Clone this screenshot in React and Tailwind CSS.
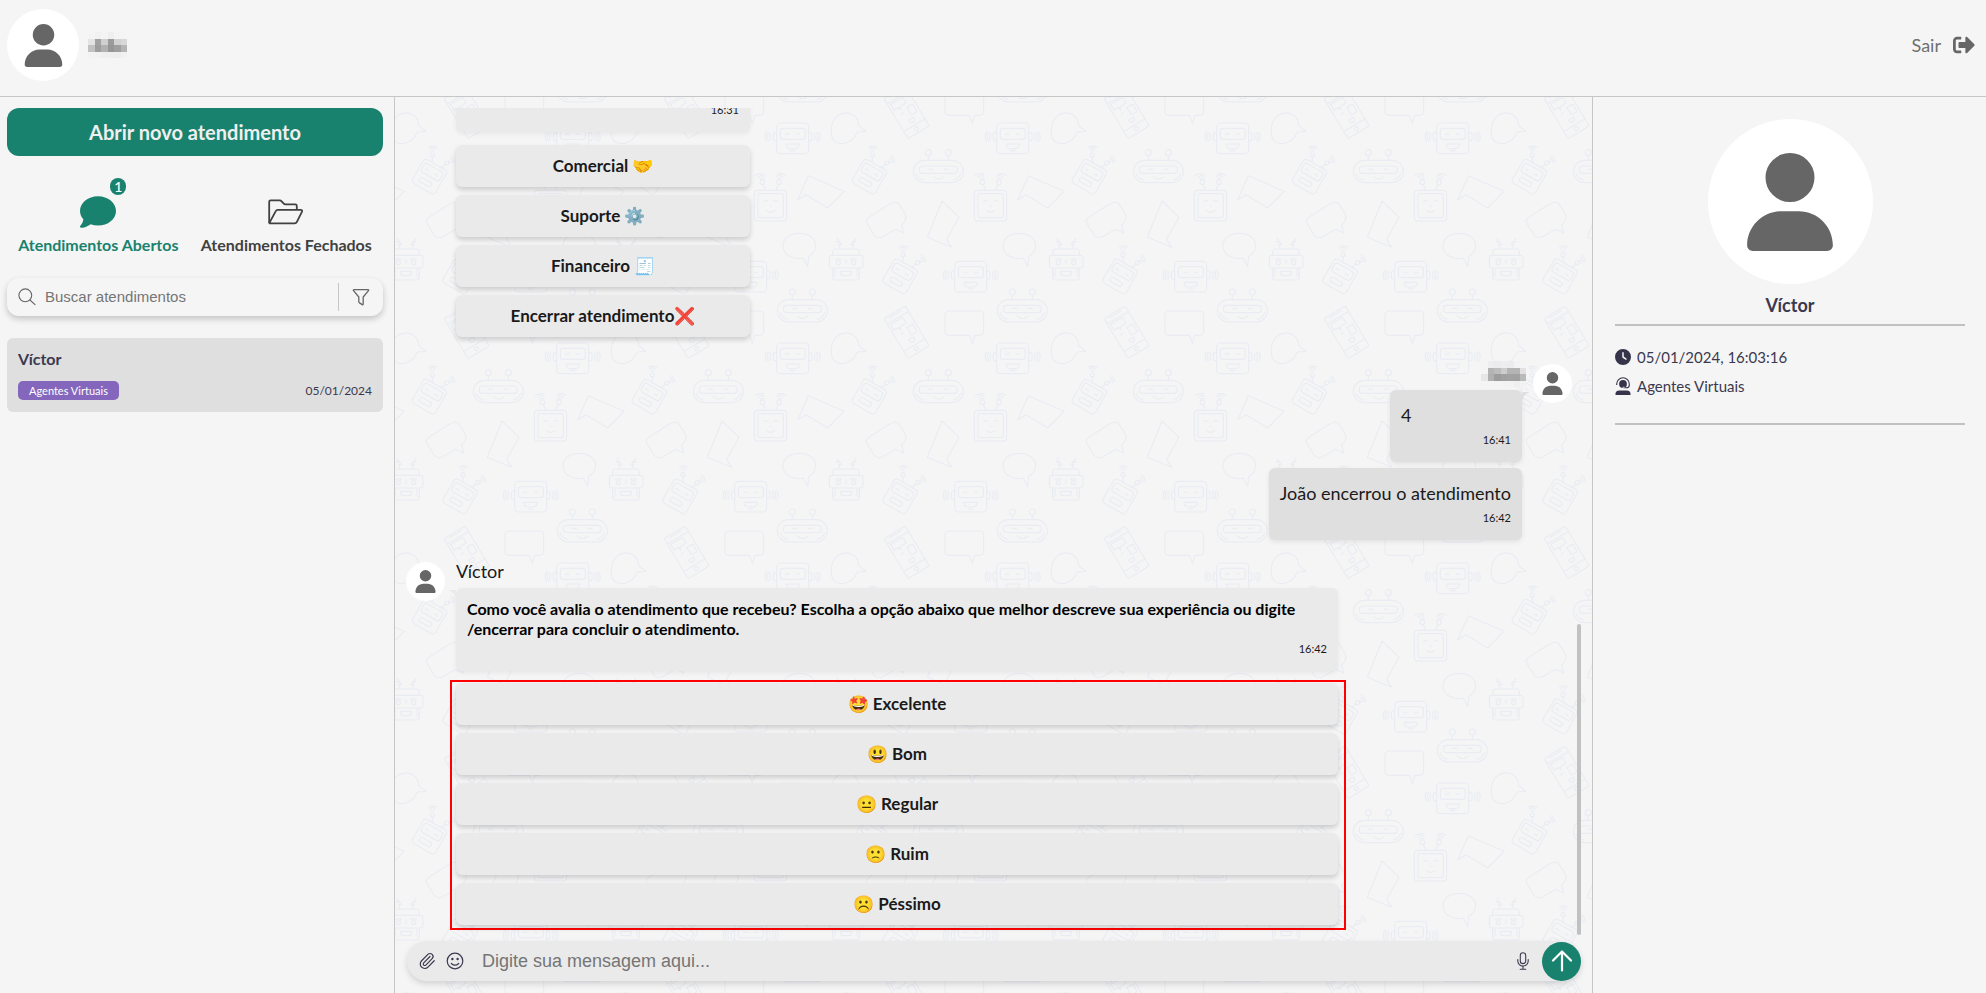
import { useState } from "react";
import { Paperclip } from "lucide-react";
import { FaSignOutAlt } from "react-icons/fa";
import { FaClock, FaComment, FaUser } from "react-icons/fa6";

const menuOptions = ["Comercial 🤝", "Suporte ⚙️", "Financeiro 🧾", "Encerrar atendimento❌"];
const ratingOptions = ["🤩 Excelente", "😃 Bom", "😐 Regular", "🙁 Ruim", "☹️ Péssimo"];

// hidden names, one array per row of gray blocks
const headerName = [
    ["#f4f4f4", "#f1f1f1", "#f4f4f4", "#efefef", "#f4f4f4", "#f4f4f4"],
    ["#e3e3e3", "#a2a2a2", "#cfcfcf", "#9b9b9b", "#d2d2d2", "#d8d8d8"],
    ["#c2c2c2", "#9e9e9e", "#b1b1b1", "#969696", "#9f9f9f", "#b5b5b5"],
    ["#f3f3f3", "#f2f2f2", "#efefef", "#efefef", "#eeeeee", "#f1f1f1"],
];
const messageName = [
    ["#f4f4f4", "#ededed", "#ebebed", "#eeeeee", "#ebeced", "#f3f3f3", "#f4f4f4"],
    ["#f4f4f4", "#b3b3b3", "#bcbcbc", "#cccccc", "#b4b4b4", "#b4b4b4", "#e2e2e2"],
    ["#e6e6e6", "#b0b0b0", "#9c9c9c", "#a0a0a0", "#a2a2a2", "#a1a1a1", "#bababa"],
    ["#f4f4f4", "#f4f4f4", "#f4f4f4", "#f3f3f3", "#f3f3f3", "#efefef", "#f2f2f2"],
];

function HiddenName({ rows }) {
    const cols = rows[0].length;
    return (
        <svg
            viewBox={`0 0 ${cols * 6.5} 26`}
            className="h-[26px] w-auto"
            shapeRendering="crispEdges"
            aria-hidden="true"
        >
            {rows.map((row, y) =>
                row.map((color, x) => (
                    <rect key={`${x}-${y}`} x={x * 6.5} y={y * 6.5} width="6.5" height="6.5" fill={color} />
                ))
            )}
        </svg>
    );
}

function EarRobot(props) {
    return (
        <g {...props}>
            <rect x="110" y="84" width="96" height="92" rx="11" />
            <rect x="121" y="100" width="75" height="33" rx="8" />
            <path d="M110 113h-5q-5 0-5 5v14q0 5 5 5h5M206 113h5q5 0 5 5v14q0 5-5 5h-5" />
            <path d="M92 115q-5 10 0 20M86 112q-8 13 0 26M80 110q-9 15 0 30M223 115q5 10 0 20M229 112q8 13 0 26M236 110q9 15 0 30" />
            <path d="M137 119q5-6 10 0M169 119q5-6 10 0" />
            <path d="M138 147h40q-1 13-12 14h-16q-11-1-12-14zM151 167h14" />
        </g>
    );
}

function OvalRobot(props) {
    return (
        <g {...props}>
            <rect x="520" y="196" width="150" height="67" rx="33" />
            <rect x="538" y="213" width="114" height="22" rx="10" />
            <path d="M565 183v13M625 183v13M566 225q6-7 12 0M613 225q6-7 12 0M580 245q16 15 32 0M528 235q5 15 22 20M662 235q-5 15-22 20" />
            <circle cx="565" cy="173" r="9" />
            <circle cx="625" cy="173" r="9" />
        </g>
    );
}

function TiltRobot(props) {
    return (
        <g {...props}>
            <g transform="rotate(30 388 245)">
                <rect x="348" y="204" width="80" height="82" rx="10" />
                <rect x="356" y="214" width="64" height="30" rx="8" />
                <rect x="366" y="258" width="40" height="14" rx="7" />
                <path d="M366 232q5-6 10 0M398 232q5-6 10 0" />
            </g>
            <circle cx="397" cy="180" r="6" />
            <circle cx="440" cy="204" r="6" />
            <path d="M397 186v17M436 208l-12 11M420 214l8 6" />
            <path d="M393 168q4-4 8 0M389 162q8-7 17 0M386 156q11-6 26 1M447 197q4 3 3 7M450 189q8 5 7 13M453 182q12 8 11 20" />
        </g>
    );
}

// one 660x660 group of robots and balloons, repeated over the chat
function Doodles() {
    return (
        <g id="doodles">
            <EarRobot />
            <EarRobot transform="translate(534 415)" />
            <OvalRobot />
            <OvalRobot transform="translate(-408 418)" />
            <TiltRobot />
            <TiltRobot transform="translate(92 299)" />
            <path d="M353 76C345 58 325 51 308 55C282 61 271 90 274 118C277 140 295 148 312 145C333 142 345 128 352 111L378 109L356 92Q356 84 353 76Z" />
            <g transform="rotate(-31 500 712)">
                <rect x="463" y="642" width="74" height="140" rx="5" />
                <path d="M463 661h74M463 757h74M471 667h42v20h-18l-7 9v-9h-17zM508 700h20v26h-20zM482 710q5-6 9 0M493 735h18q-1 12-9 12t-9-12M479 648h40" />
                <circle cx="500" cy="769" r="6" />
            </g>
            <path d="M628 648h90q13 0 13 13v47q0 13-13 13h-13l-8 24l-9-24h-60q-13 0-13-13v-47q0-13 13-13z" />
            <g>
                <rect x="43" y="286" width="97" height="92" rx="10" />
                <rect x="54" y="296" width="76" height="72" rx="5" />
                <path d="M71 320q6-9 12 0M101 320q6-9 12 0M92 331v4M80 346q12 12 25 0" />
                <circle cx="67" cy="262" r="7" />
                <circle cx="117" cy="262" r="7" />
                <path d="M69 269l6 10v7M115 269l-6 10v7M61 253q5-5 11-1M55 247q8-8 18-3M46 241q12-8 26-4M112 252q6-4 11 1M111 244q10-5 18 3M112 237q14-4 26 4" />
            </g>
            <path d="M205 242l107 47l-49 50l-65-40l-25 15z" />
            <path d="M389 365L445 329Q470 315 478 328L495 356Q505 371 485 390L491 414L467 403L428 425Q411 433 402 420L382 387Q373 374 389 365Z" />
            <path d="M606 318l51 49l-37 66l15 24l-73-30z" />
            <path d="M189 489C165 495 129 483 129 453C129 430 150 415 178 415C206 415 227 430 227 454C227 467 220 477 206 484L203 514Z" />
            <g>
                <rect x="268" y="481" width="101" height="38" rx="8" />
                <path d="M278 481v-9q0-10 10-10h60q10 0 10 10v9M278 519v27q0 9 9 9h62q9 0 9-9v-27M285 519v25M351 519v25" />
                <path d="M302 529h32v5q0 8-8 8h-16q-8 0-8-8zM318 494v12M286 494q9-6 18 0M332 494q9-6 18 0" />
                <circle cx="295" cy="503" r="6" />
                <circle cx="341" cy="503" r="6" />
                <path d="M300 461l-4-13l8 1l-13-18M295 442l-8-2M337 461l4-13l-8 1l14-18M341 442l8-2" />
            </g>
        </g>
    );
}

function ChatBackground() {
    return (
        <svg className="absolute inset-0 -z-10 h-full w-full" aria-hidden="true">
            <defs>
                <pattern
                    id="robots"
                    width="660"
                    height="660"
                    patternUnits="userSpaceOnUse"
                    patternTransform="translate(125 -2) scale(.33333)"
                >
                    <g fill="none" stroke="#e9ecf2" strokeWidth="3.5" strokeLinejoin="round" strokeLinecap="round">
                        <Doodles />
                        <use href="#doodles" x="-660" />
                        <use href="#doodles" y="-660" />
                        <use href="#doodles" x="-660" y="-660" />
                    </g>
                </pattern>
            </defs>
            <rect width="100%" height="100%" fill="url(#robots)" />
        </svg>
    );
}

function FolderIcon() {
    return (
        <svg viewBox="0 0 36 26" className="h-[26px] w-9" fill="none" stroke="#414141" strokeWidth="1.8" strokeLinejoin="round">
            <path d="M1.2 24V2.8Q1.2 1.4 2.6 1.4h9.2q1 0 1.6.7l2.4 2.6q.6.7 1.6.7h9.9q1.5 0 1.5 1.5v3.8" />
            <path d="M1.3 24.2L7.6 12.3q.7-1.4 2.2-1.4h22.8q2.3 0 1.3 2l-5 9.9q-.7 1.6-2.3 1.6H2.2q-1 0-.9-1" />
        </svg>
    );
}

function SearchIcon() {
    return (
        <svg viewBox="0 0 18 18" className="size-[18px]" fill="none" stroke="#666" strokeWidth="1.1" strokeLinecap="round">
            <circle cx="7.3" cy="7.3" r="6.4" />
            <path d="M12 12l5 4.6" />
        </svg>
    );
}

function FilterIcon() {
    return (
        <svg viewBox="0 0 18 18" className="size-[18px]" fill="none" stroke="#666" strokeWidth="1.3" strokeLinejoin="round">
            <path d="M2 1.7h14q1.1 0 .5 1L11.2 9v7q0 1.2-1 .6l-3-2q-.4-.3-.4-.8V9L1.5 2.7q-.6-1 .5-1z" />
        </svg>
    );
}

function SmileIcon() {
    return (
        <svg viewBox="0 0 18 18" className="size-[18px]" fill="none" stroke="#3b394f" strokeWidth="1.2" strokeLinecap="round">
            <circle cx="9" cy="9" r="7.8" />
            <path d="M5.3 11.5q3.7 3.4 7.4 0" />
            <circle cx="6.4" cy="7" r=".6" fill="#3b394f" />
            <circle cx="11.6" cy="7" r=".6" fill="#3b394f" />
        </svg>
    );
}

function MicIcon() {
    return (
        <svg viewBox="0 0 12 18" className="h-[18px] w-3" fill="none" stroke="#3b394f" strokeWidth="1.1" strokeLinecap="round">
            <rect x="3.3" y=".8" width="5.4" height="10.8" rx="2.7" />
            <path d="M.8 7.5v1.4a5.2 5.2 0 0 0 10.4 0V7.5M6 14.2v3M3.2 17.2h5.6" />
        </svg>
    );
}

function ArrowUpIcon() {
    return (
        <svg viewBox="0 0 22 22" className="size-[22px]" fill="none" stroke="#fff" strokeWidth="2.2" strokeLinecap="round" strokeLinejoin="round">
            <path d="M11 20.5v-19M2 10.5l9-9l9 9" />
        </svg>
    );
}

function HeadsetIcon() {
    return (
        <svg viewBox="0 0 16 18" className="h-[18px] w-4" fill="#36344a">
            <path d="M1 18q-.6 0-.6-.7q0-3.9 3.9-3.9h7.4q3.9 0 3.9 3.9q0 .7-.6.7z" />
            <circle cx="8" cy="7" r="3.9" />
            <path d="M1.7 8V7a6.3 6.3 0 0 1 12.6 0v1q0 2.8-2.8 2.8H8.5" fill="none" stroke="#36344a" strokeWidth="1.1" />
            <path d="M7.5 10.3h2.2" stroke="#f5f5f5" strokeWidth=".8" />
        </svg>
    );
}

function OptionButton({ children }) {
    return (
        <button
            type="button"
            className="h-[42px] w-full rounded-md bg-[#eaeaea] text-[17px] font-bold text-[#1a1a1a] shadow-[0_3px_5px_rgba(0,0,0,0.16)]"
        >
            {children}
        </button>
    );
}

function SmallAvatar() {
    return (
        <div className="flex size-[39px] shrink-0 items-center justify-center rounded-full bg-white">
            <FaUser className="size-[23px] text-[#666]" />
        </div>
    );
}

function OwnMessage({ text, time, children }) {
    return (
        <div className="relative flex min-w-[132px] flex-col rounded-md bg-[#dfdfdf] px-[11px] pt-[11px] pb-[11px] shadow-[0_2px_5px_rgba(0,0,0,0.08)]">
            {children}
            <p className="text-lg leading-7">{text}</p>
            <time className="text-right text-[11px] leading-[22px]">{time}</time>
        </div>
    );
}

function Header() {
    return (
        <header className="flex h-[97px] shrink-0 items-center justify-between border-b border-[#c6c6c6] pr-[11px] pb-1.5 pl-[7px]">
            <div className="flex items-center gap-[9px]">
                <div className="flex size-[72px] items-center justify-center rounded-full bg-white">
                    <FaUser className="size-[43px] text-[#666]" />
                </div>
                <HiddenName rows={headerName} />
            </div>
            <button type="button" className="flex items-center gap-3 text-lg text-[#707070]">
                Sair
                <FaSignOutAlt className="size-[22px] text-[#666]" />
            </button>
        </header>
    );
}

function Sidebar() {
    const [search, setSearch] = useState("");

    return (
        <aside className="flex w-[395px] shrink-0 flex-col border-r border-[#c6c6c6] pt-[11px] pr-[11px] pl-[7px]">
            <button type="button" className="h-12 shrink-0 rounded-xl bg-[#19826e] text-xl font-bold text-[#efefef]">
                Abrir novo atendimento
            </button>

            <nav className="mt-[38px] flex justify-around">
                <button type="button" className="relative flex flex-col items-center gap-[3px] font-bold text-[#19826e]">
                    <FaComment className="size-9" />
                    <span className="text-base leading-6">Atendimentos Abertos</span>
                    <span className="absolute -top-4 left-1/2 ml-3 flex h-[17px] w-4 items-center justify-center rounded-full bg-[#19826e] text-sm leading-none font-medium text-white">
                        1
                    </span>
                </button>
                <button type="button" className="flex flex-col items-center gap-[3px] font-bold text-[#414141]">
                    <span className="flex h-9 items-center">
                        <FolderIcon />
                    </span>
                    <span className="text-base leading-6">Atendimentos Fechados</span>
                </button>
            </nav>

            <div className="mt-[21px] flex h-[38px] shrink-0 items-center rounded-xl pl-[11px] shadow-[0_3px_6px_rgba(0,0,0,0.2)]">
                <SearchIcon />
                <input
                    type="text"
                    aria-label="Buscar atendimentos"
                    placeholder="Buscar atendimentos"
                    value={search}
                    onChange={(e) => setSearch(e.target.value)}
                    className="ml-[9px] min-w-0 flex-1 bg-transparent font-['Liberation_Sans',sans-serif] text-[15px] outline-none placeholder:text-[#757575]"
                />
                <button
                    type="button"
                    aria-label="Filtrar"
                    className="flex h-7 w-[45px] items-center justify-center border-l border-[#c6c6c6]"
                >
                    <FilterIcon />
                </button>
            </div>

            <a href="#victor" className="mt-[22px] flex flex-col rounded-md bg-[#dfdfdf] px-[11px] pt-[9px] pb-3 text-[#3b394f]">
                <strong className="text-base leading-6">Víctor</strong>
                <span className="mt-[10px] flex items-center justify-between">
                    <span className="rounded-[5px] bg-[#8467bd] px-[11px] text-[11px] leading-[19px] text-white">Agentes Virtuais</span>
                    <span className="text-xs leading-[19px]">05/01/2024</span>
                </span>
            </a>
        </aside>
    );
}

function Chat() {
    const [message, setMessage] = useState("");

    return (
        <main className="relative isolate flex min-w-0 flex-1 flex-col pt-[11px] pb-3">
            <ChatBackground />
            <div className="flex min-h-0 flex-1 flex-col justify-end overflow-hidden pr-[10px] pb-[11px] pl-[11px] text-[#1a1a1a]">
                <section className="flex shrink-0 pl-[50px]">
                    <div className="w-[294px]">
                        <div className="rounded-md bg-[#eaeaea] px-[11px] pt-3 pb-3 text-right shadow-[0_2px_5px_rgba(0,0,0,0.06)]">
                            <time className="block text-[11px] leading-5">16:31</time>
                        </div>
                        <div className="mt-[13px] flex flex-col gap-2">
                            {menuOptions.map((option) => (
                                <OptionButton key={option}>{option}</OptionButton>
                            ))}
                        </div>
                    </div>
                </section>

                <section className="mt-6 flex shrink-0 justify-end gap-[11px] pr-[10px]">
                    <div className="flex flex-col items-end">
                        <div className="mb-[3px] -mr-1">
                            <HiddenName rows={messageName} />
                        </div>
                        <OwnMessage text="4" time="16:41">
                            <svg viewBox="0 0 8 10" className="absolute top-0.5 left-full h-[10px] w-2" fill="#dfdfdf">
                                <path d="M0 0H8Q1 2 0 10z" />
                            </svg>
                        </OwnMessage>
                        <div className="mt-1.5">
                            <OwnMessage text="João encerrou o atendimento" time="16:42" />
                        </div>
                    </div>
                    <div className="pt-[3px]">
                        <SmallAvatar />
                    </div>
                </section>

                <section className="mt-[19px] flex shrink-0 gap-[11px]">
                    <div className="pt-[3px]">
                        <SmallAvatar />
                    </div>
                    <div className="w-3/4">
                        <p className="text-lg leading-6">Víctor</p>
                        <div className="relative mt-[5px] flex flex-col rounded-md bg-[#eaeaea] px-[11px] pt-[11px] pb-3 shadow-[0_2px_5px_rgba(0,0,0,0.06)]">
                            <svg viewBox="0 0 8 10" className="absolute top-0.5 right-full h-[10px] w-2" fill="#eaeaea">
                                <path d="M8 0H0Q7 2 8 10z" />
                            </svg>
                            <p className="text-base leading-5 font-bold text-black">
                                Como você avalia o atendimento que recebeu? Escolha a opção abaixo que melhor descreve sua
                                experiência ou digite /encerrar para concluir o atendimento.
                            </p>
                            <time className="text-right text-[11px] leading-5">16:42</time>
                        </div>
                        <div className="mt-[9px] -mr-2 -ml-1.5 flex flex-col gap-2 border-2 border-[#ff0000] pt-px pr-1.5 pb-[3px] pl-1">
                            {ratingOptions.map((option) => (
                                <OptionButton key={option}>{option}</OptionButton>
                            ))}
                        </div>
                    </div>
                </section>
            </div>

            {/* scroll thumb */}
            <div className="absolute right-[11px] bottom-[58px] h-[311px] w-1 rounded-full bg-[#c1c1c1]" />

            <form
                onSubmit={(e) => e.preventDefault()}
                className="mr-[11px] ml-3 flex h-10 shrink-0 items-center rounded-full bg-[#eaeaea] pl-[11px] shadow-[0_3px_6px_rgba(0,0,0,0.14)]"
            >
                <button type="button" aria-label="Anexar">
                    <Paperclip className="size-[18px] text-[#3b394f]" strokeWidth={1.6} />
                </button>
                <button type="button" aria-label="Emojis" className="ml-[10px]">
                    <SmileIcon />
                </button>
                <input
                    type="text"
                    aria-label="Mensagem"
                    placeholder="Digite sua mensagem aqui..."
                    value={message}
                    onChange={(e) => setMessage(e.target.value)}
                    className="ml-[18px] min-w-0 flex-1 bg-transparent font-['Liberation_Sans',sans-serif] text-lg outline-none placeholder:text-[#757575]"
                />
                <button type="button" aria-label="Gravar áudio" className="mr-[13px]">
                    <MicIcon />
                </button>
                <button
                    type="submit"
                    aria-label="Enviar"
                    className="flex size-[39px] items-center justify-center rounded-full bg-[#19826e]"
                >
                    <ArrowUpIcon />
                </button>
            </form>
        </main>
    );
}

function Details() {
    return (
        <aside className="flex w-[394px] shrink-0 flex-col border-l border-[#c6c6c6] pt-[22px] pr-[21px] pl-[22px] text-[#3b394f]">
            <div className="flex size-[165px] items-center justify-center self-center rounded-full bg-white">
                <FaUser className="size-[98px] text-[#666]" />
            </div>
            <h2 className="border-b-2 border-[#c1c1c1] pt-2 pb-1.5 text-center text-lg leading-[26px] font-bold">Víctor</h2>
            <ul className="mt-[17px] flex flex-col gap-[5px] border-b-2 border-[#c1c1c1] pb-[25px] text-[15px] leading-6">
                <li className="flex items-center gap-1.5 pt-0.5">
                    <FaClock className="size-4 text-[#36344a]" />
                    05/01/2024, 16:03:16
                </li>
                <li className="flex items-center gap-1.5">
                    <HeadsetIcon />
                    Agentes Virtuais
                </li>
            </ul>
        </aside>
    );
}

function App() {
    return (
        <div className="flex h-screen flex-col overflow-hidden bg-[#f5f5f5] font-[Lato,sans-serif]">
            <Header />
            <div className="flex min-h-0 flex-1">
                <Sidebar />
                <Chat />
                <Details />
            </div>
        </div>
    );
}

export default App;
